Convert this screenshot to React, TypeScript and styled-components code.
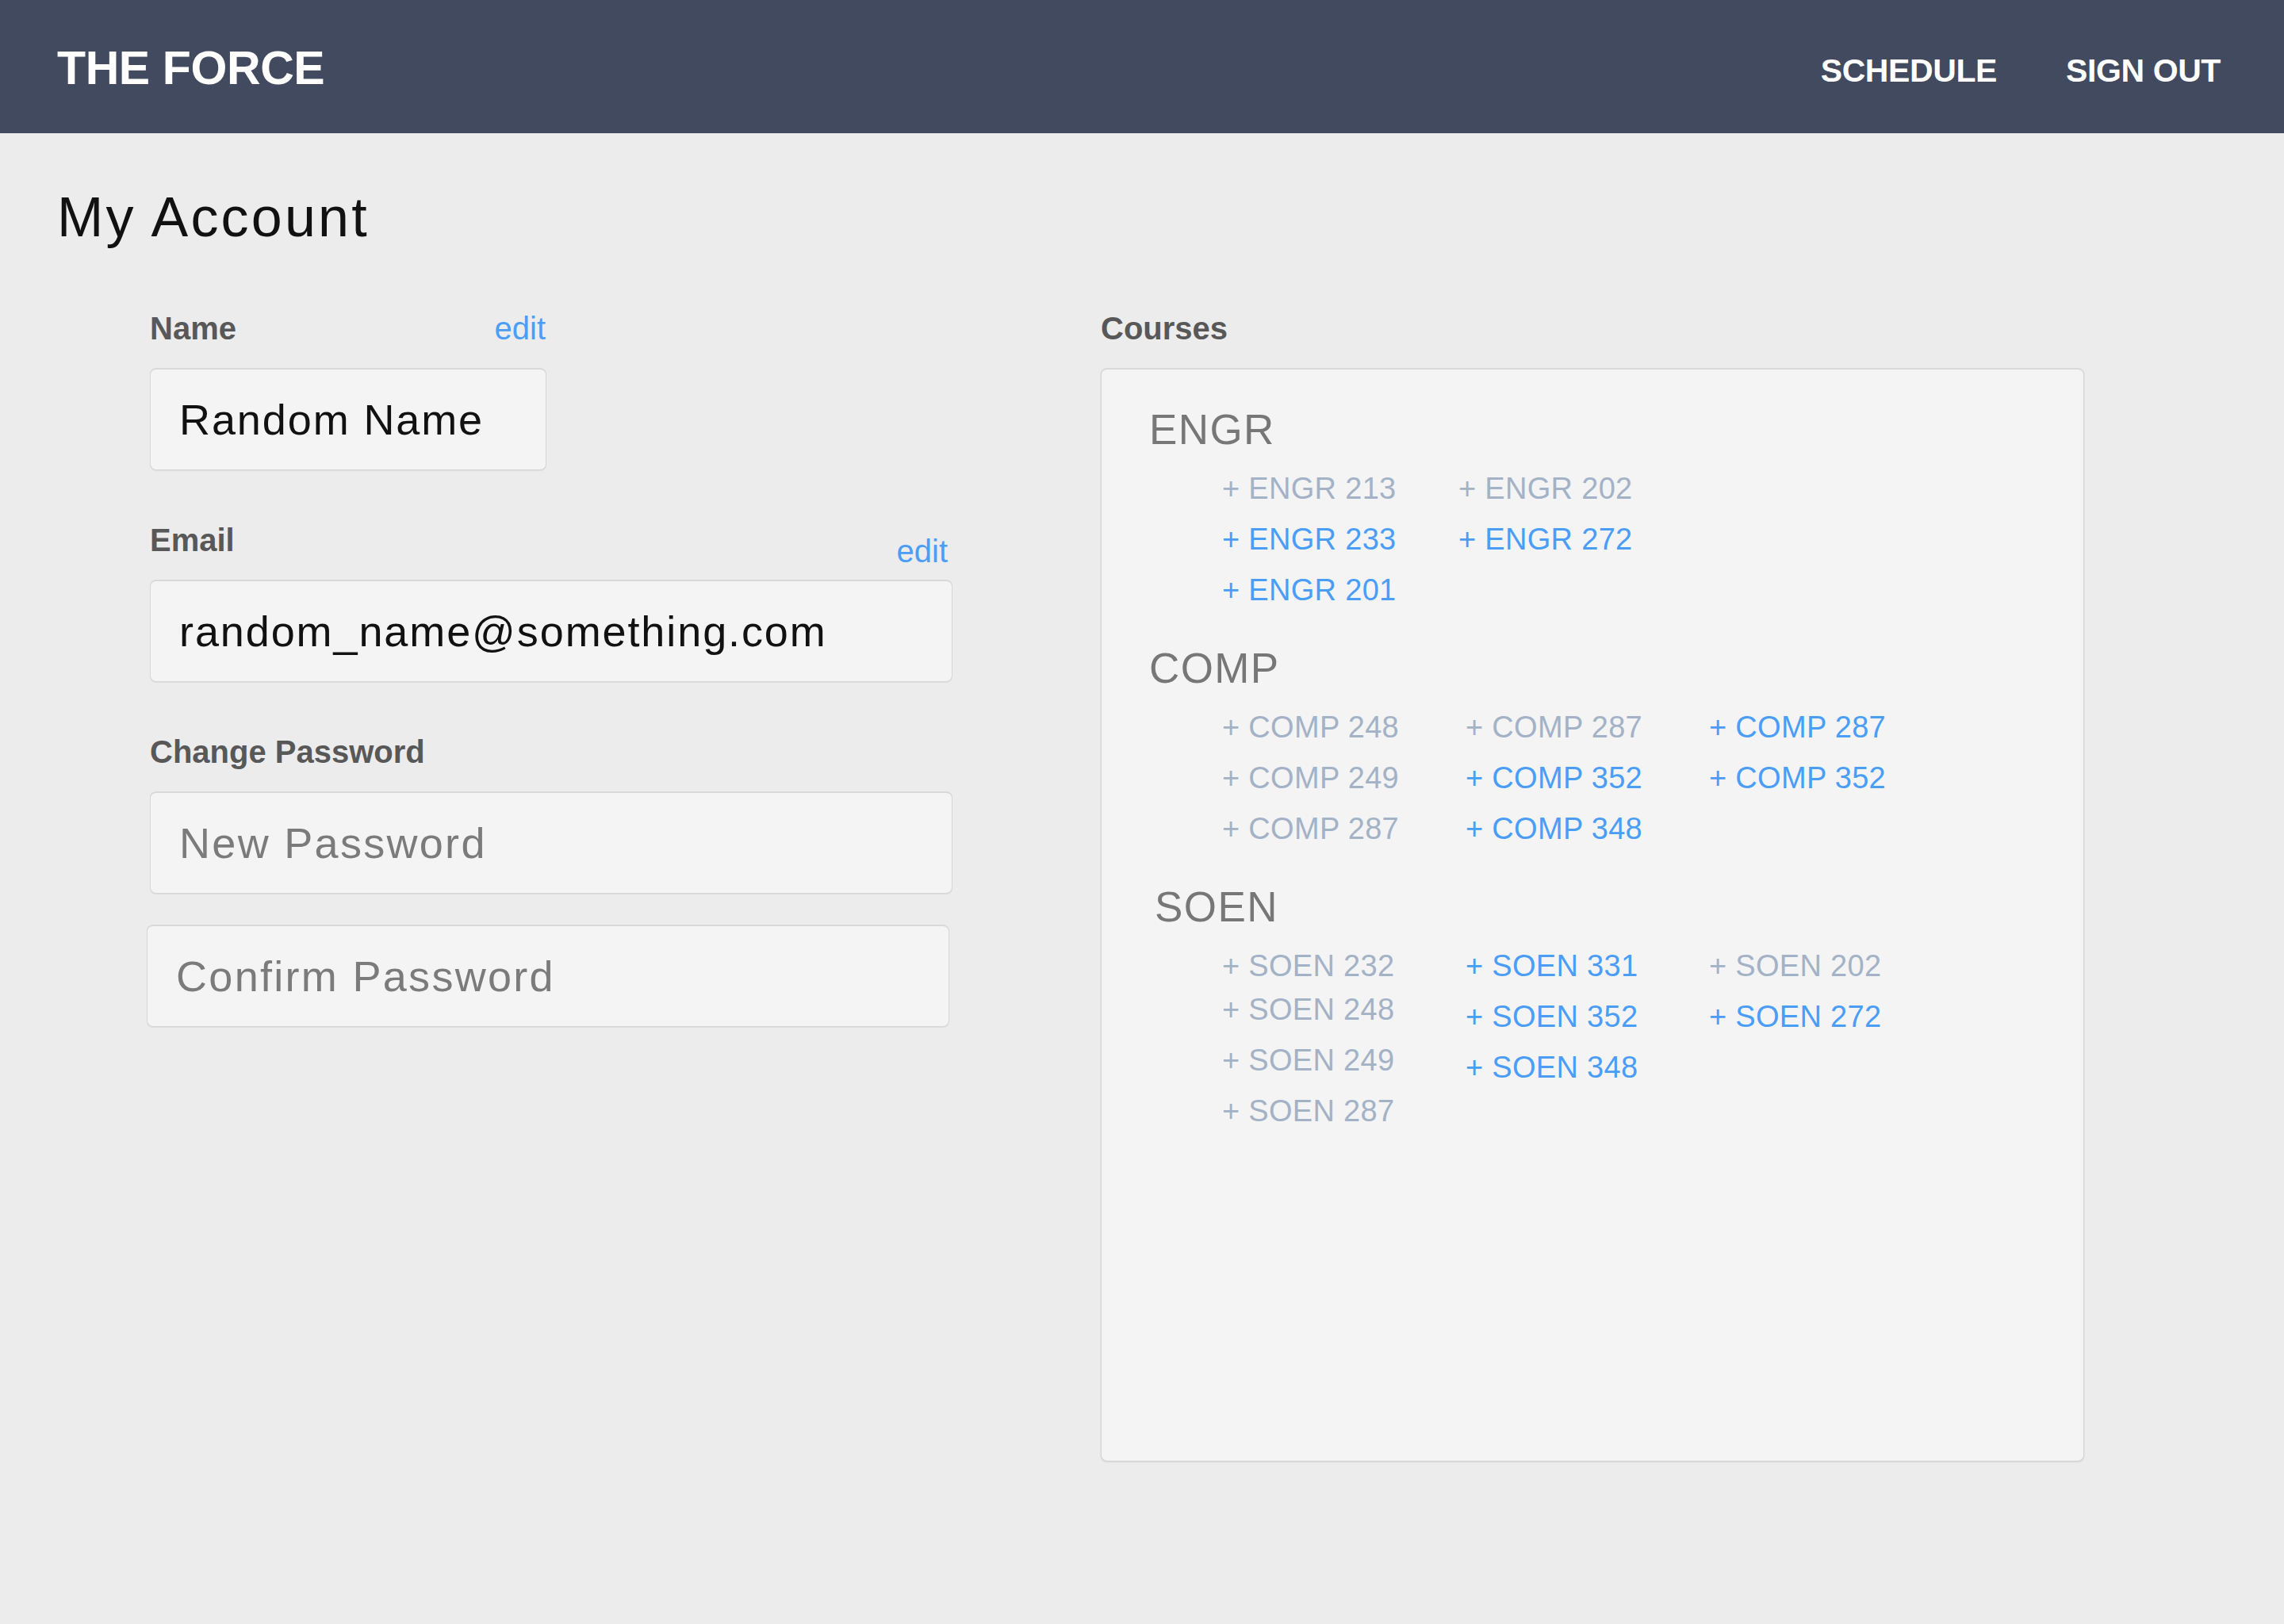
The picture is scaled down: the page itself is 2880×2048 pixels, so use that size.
import React from "react";
import styled, { createGlobalStyle } from "styled-components";

const GlobalStyle = createGlobalStyle`
  html, body {
    margin: 0;
    padding: 0;
    background: #ececec;
  }
  body {
    font-family: "Liberation Sans", Arial, Helvetica, sans-serif;
    min-height: 2048px;
  }
  *, *::before, *::after {
    box-sizing: border-box;
  }
`;

/* ---------- Top bar ---------- */

const TopBar = styled.header`
  height: 168px;
  background: #414a5f;
  display: flex;
  align-items: center;
  justify-content: space-between;
  padding: 0 80px 0 72px;
`;

const Brand = styled.div`
  font-size: 59px;
  line-height: 59px;
  font-weight: 700;
  color: #ffffff;
  letter-spacing: -0.4px;
  margin-top: 4px;
`;

const Nav = styled.nav`
  display: flex;
  gap: 87px;
  margin-top: 11px;
`;

const NavLink = styled.a`
  font-size: 41px;
  line-height: 41px;
  font-weight: 700;
  color: #ffffff;
  text-decoration: none;
  letter-spacing: -0.4px;
`;

/* ---------- Page ---------- */

const Main = styled.main`
  padding: 0 72px;
`;

const Title = styled.h1`
  margin: 71px 0 0;
  font-size: 70px;
  line-height: 70px;
  font-weight: 400;
  color: #111111;
  letter-spacing: 3.2px;
`;

const Columns = styled.div`
  display: flex;
  align-items: flex-start;
  gap: 187px;
  margin: 85px 0 0 117px;
`;

/* ---------- Account form ---------- */

const FormColumn = styled.section`
  width: 1012px;
  display: flex;
  flex-direction: column;
  gap: 68px;
`;

const Field = styled.div<{ $width?: number }>`
  width: ${(p) => p.$width ?? 1012}px;
  display: flex;
  flex-direction: column;
`;

const FieldHead = styled.div`
  height: 40px;
  margin-bottom: 30px;
  display: flex;
  justify-content: space-between;
  align-items: flex-start;
`;

const Label = styled.label`
  font-size: 40px;
  line-height: 40px;
  font-weight: 700;
  color: #585858;
`;

const EditLink = styled.a<{ $drop?: number; $inset?: number }>`
  font-size: 40px;
  line-height: 40px;
  color: #4a9ef6;
  text-decoration: none;
  margin-top: ${(p) => p.$drop ?? 0}px;
  margin-right: ${(p) => p.$inset ?? 0}px;
`;

const TextBox = styled.input<{ $shift?: number; $gap?: number }>`
  display: block;
  width: 100%;
  height: 129px;
  margin: ${(p) => p.$gap ?? 0}px 0 0 ${(p) => p.$shift ?? 0}px;
  padding: 0 0 0 36px;
  font-family: "Liberation Sans", Arial, Helvetica, sans-serif;
  font-size: 54px;
  letter-spacing: 1.9px;
  color: #111111;
  background: #f4f4f4;
  border: 1px solid #d7d7d7;
  border-top: 2px solid #d9d9d9;
  border-radius: 8px;
  box-shadow: 0 1px 1px rgba(0, 0, 0, 0.07);
  outline: none;

  &::placeholder {
    color: #7b7b7b;
    opacity: 1;
    letter-spacing: 2.3px;
  }
`;

/* ---------- Courses ---------- */

const CoursesColumn = styled.section`
  width: 1240px;
  display: flex;
  flex-direction: column;
`;

const CoursePanel = styled.div`
  height: 1379px;
  background: #f4f4f4;
  border: 1px solid #d3d3d3;
  border-top: 2px solid #d9d9d9;
  border-radius: 8px;
  box-shadow: 0 1px 2px rgba(0, 0, 0, 0.1);
  padding: 49px 0 0 60px;
  display: flex;
  flex-direction: column;
  gap: 40px;
`;

const Group = styled.div`
  display: flex;
  flex-direction: column;
`;

const GroupTitle = styled.h2<{ $indent?: number }>`
  margin: 0 0 15px ${(p) => p.$indent ?? 0}px;
  font-size: 53px;
  line-height: 54px;
  font-weight: 400;
  color: #777777;
  letter-spacing: 1.4px;
`;

const CourseGrid = styled.div`
  display: flex;
  margin-left: 92px;
`;

const CourseCol = styled.div<{ $width: number }>`
  width: ${(p) => p.$width}px;
  display: flex;
  flex-direction: column;
`;

const CourseItem = styled.a<{ $active?: boolean; $nudge?: number }>`
  font-size: 38px;
  line-height: 64px;
  letter-spacing: 0.3px;
  white-space: nowrap;
  text-decoration: none;
  color: ${(p) => (p.$active ? "#4a9df8" : "#a3b2c6")};
  margin-top: ${(p) => p.$nudge ?? 0}px;
`;

type Course = { code: string; active?: boolean; nudge?: number };
type CourseGroup = {
  name: string;
  indent?: number;
  colWidth: number;
  columns: Course[][];
};

const groups: CourseGroup[] = [
  {
    name: "ENGR",
    colWidth: 298,
    columns: [
      [{ code: "ENGR 213" }, { code: "ENGR 233", active: true }, { code: "ENGR 201", active: true }],
      [{ code: "ENGR 202" }, { code: "ENGR 272", active: true }],
    ],
  },
  {
    name: "COMP",
    colWidth: 307,
    columns: [
      [{ code: "COMP 248" }, { code: "COMP 249" }, { code: "COMP 287" }],
      [{ code: "COMP 287" }, { code: "COMP 352", active: true }, { code: "COMP 348", active: true }],
      [{ code: "COMP 287", active: true }, { code: "COMP 352", active: true }],
    ],
  },
  {
    name: "SOEN",
    indent: 7,
    colWidth: 307,
    columns: [
      [{ code: "SOEN 232" }, { code: "SOEN 248", nudge: -9 }, { code: "SOEN 249" }, { code: "SOEN 287" }],
      [{ code: "SOEN 331", active: true }, { code: "SOEN 352", active: true }, { code: "SOEN 348", active: true }],
      [{ code: "SOEN 202" }, { code: "SOEN 272", active: true }],
    ],
  },
];

export default function App() {
  return (
    <>
      <GlobalStyle />
      <TopBar>
        <Brand>THE FORCE</Brand>
        <Nav>
          <NavLink href="#">SCHEDULE</NavLink>
          <NavLink href="#">SIGN OUT</NavLink>
        </Nav>
      </TopBar>
      <Main>
        <Title>My Account</Title>
        <Columns>
          <FormColumn>
            <Field $width={500}>
              <FieldHead>
                <Label>Name</Label>
                <EditLink href="#" $inset={1}>edit</EditLink>
              </FieldHead>
              <TextBox readOnly defaultValue="Random Name" />
            </Field>
            <Field>
              <FieldHead>
                <Label>Email</Label>
                <EditLink href="#" $drop={14} $inset={6}>edit</EditLink>
              </FieldHead>
              <TextBox readOnly defaultValue="random_name@something.com" />
            </Field>
            <Field>
              <FieldHead>
                <Label>Change Password</Label>
              </FieldHead>
              <TextBox type="password" placeholder="New Password" />
              <TextBox type="password" placeholder="Confirm Password" $gap={39} $shift={-4} />
            </Field>
          </FormColumn>
          <CoursesColumn>
            <FieldHead>
              <Label>Courses</Label>
            </FieldHead>
            <CoursePanel>
              {groups.map((g) => (
                <Group key={g.name}>
                  <GroupTitle $indent={g.indent}>{g.name}</GroupTitle>
                  <CourseGrid>
                    {g.columns.map((col, ci) => (
                      <CourseCol key={ci} $width={g.colWidth}>
                        {col.map((c, ri) => (
                          <CourseItem key={ri} href="#" $active={c.active} $nudge={c.nudge}>
                            + {c.code}
                          </CourseItem>
                        ))}
                      </CourseCol>
                    ))}
                  </CourseGrid>
                </Group>
              ))}
            </CoursePanel>
          </CoursesColumn>
        </Columns>
      </Main>
    </>
  );
}
